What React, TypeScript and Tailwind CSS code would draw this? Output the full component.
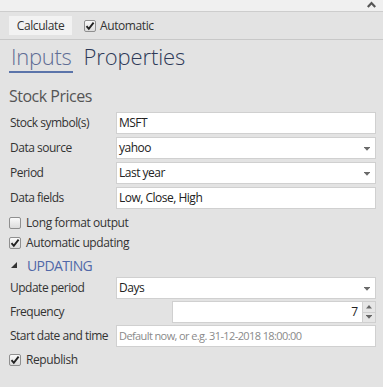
import React from "react";

function Check({ checked }: { checked: boolean }) {
  return (
    <span className="relative flex h-[12px] w-[12px] shrink-0 items-center justify-center rounded-[2px] border border-[#8f8f8f] bg-gradient-to-b from-[#fafafa] to-[#dcdcdc]">
      {checked && (
        <svg width="10" height="10" viewBox="0 0 10 10" className="absolute left-[0px] top-[0px]">
          <path d="M1.5 5.2 L3.8 7.8 L8.6 1.6" fill="none" stroke="#222" strokeWidth="1.9" />
        </svg>
      )}
    </span>
  );
}

function DropArrow() {
  return (
    <svg width="6" height="4" viewBox="0 0 6 4" className="absolute right-[5px] top-[9px]">
      <path d="M0 0 H6 V1 H0 Z M0.5 1 H5.5 L3 3.8 Z" fill="#6a6a6a" />
    </svg>
  );
}

function Field({
  value,
  placeholder,
  select,
}: {
  value?: string;
  placeholder?: string;
  select?: boolean;
}) {
  return (
    <div className="relative flex h-[22px] items-center border border-[#d0d0d0] bg-white pl-[2px] text-[12px] tracking-[-0.5px] text-[#222]">
      {value ? (
        <span>{value}</span>
      ) : (
        <span className="text-[11px] tracking-[-0.6px] text-[#8a8a8a]">{placeholder}</span>
      )}
      {select && <DropArrow />}
    </div>
  );
}

function Row({ label, children }: { label: string; children: React.ReactNode }) {
  return (
    <div className="flex h-[22px] items-center">
      <div className="w-[107px] shrink-0 whitespace-nowrap pl-px text-[12px] tracking-[-0.5px] text-[#333]">
        {label}
      </div>
      <div className="flex-1">{children}</div>
    </div>
  );
}

function CheckRow({ label, checked, h }: { label: string; checked: boolean; h: string }) {
  return (
    <div className={`flex items-center gap-[5px] ${h}`}>
      <Check checked={checked} />
      <span className="text-[12px] tracking-[-0.4px] text-[#333]">{label}</span>
    </div>
  );
}

export default function App() {
  return (
    <div
      className="h-[387px] w-[383px] overflow-hidden bg-[#e3e3e3]"
      style={{ fontFamily: '"Open Sans", "Liberation Sans", sans-serif' }}
    >
      {/* top strip */}
      <div className="flex h-[12px] items-start justify-end border-b border-[#cdcdcd] bg-[#f0f0f0] pr-[7px]">
        <svg width="9" height="7" viewBox="0 0 9 7" className="mt-[1px]">
          <path d="M0.8 6 L4.5 2 L8.2 6" fill="none" stroke="#555" strokeWidth="2.2" />
        </svg>
      </div>

      {/* toolbar */}
      <div className="flex h-[28px] items-center border-b border-[#c8c8c8] pl-[9px]">
        <button className="flex h-[19px] w-[63px] items-center justify-center bg-[#f2f2f2] text-[12px] tracking-[-0.4px] text-[#333]">
          Calculate
        </button>
        <div className="ml-[12px] flex items-center gap-[4px]">
          <Check checked />
          <span className="text-[12px] tracking-[-0.4px] text-[#333]">Automatic</span>
        </div>
      </div>

      {/* tabs */}
      <div className="flex items-end gap-[10px] pl-[9px] pt-[2px]">
        <div className="border-b-2 border-[#5b74aa] px-[2px] text-[22px] font-light leading-[29px] tracking-[-0.3px] text-[#5f6d95]">
          Inputs
        </div>
        <div className="pb-[2px] text-[22px] font-light leading-[29px] tracking-[-0.1px] text-[#2e3a58]">
          Properties
        </div>
      </div>

      <div className="pl-[9px] pr-[7px]">
        <div className="mt-[12px] h-[22px] text-[16px] leading-[22px] tracking-[-0.5px] text-[#555]">
          Stock Prices
        </div>

        <div className="mt-[5px] flex flex-col gap-[3px]">
          <Row label="Stock symbol(s)">
            <Field value="MSFT" />
          </Row>
          <Row label="Data source">
            <Field value="yahoo" select />
          </Row>
          <Row label="Period">
            <Field value="Last year" select />
          </Row>
          <Row label="Data fields">
            <Field value="Low, Close, High" />
          </Row>
        </div>

        <div className="mt-[4px]">
          <CheckRow label="Long format output" checked={false} h="h-[20px]" />
          <CheckRow label="Automatic updating" checked h="h-[20px]" />
        </div>

        <div className="mt-[2px] flex h-[20px] items-center gap-[10px] pl-[2px]">
          <svg width="6" height="6" viewBox="0 0 6 6">
            <path d="M6 0 V6 H0 Z" fill="#333" />
          </svg>
          <span className="text-[14px] tracking-[-0.6px] text-[#5068a8]">UPDATING</span>
        </div>

        <div className="mt-[2px] flex flex-col gap-[2px]">
          <Row label="Update period">
            <Field value="Days" select />
          </Row>
          <Row label="Frequency">
            <div className="flex h-[22px] pl-[56px]">
              <div className="flex flex-1 items-center justify-end border border-[#d0d0d0] bg-white pr-[4px] text-[12px] text-[#222]">
                7
              </div>
              <div className="flex w-[13px] flex-col">
                <div className="flex flex-1 items-center justify-center border border-l-0 border-[#cfcfcf] bg-[#e6e6e6]">
                  <svg width="6" height="4" viewBox="0 0 6 4">
                    <path d="M3 0 L6 3.5 H0 Z" fill="#666" />
                  </svg>
                </div>
                <div className="flex flex-1 items-center justify-center border border-l-0 border-t-0 border-[#cfcfcf] bg-[#e6e6e6]">
                  <svg width="6" height="4" viewBox="0 0 6 4">
                    <path d="M0 0 H6 V1 H0 Z M0.5 1 H5.5 L3 3.8 Z" fill="#666" />
                  </svg>
                </div>
              </div>
            </div>
          </Row>
          <Row label="Start date and time">
            <Field placeholder="Default now, or e.g. 31-12-2018 18:00:00" />
          </Row>
        </div>

        <CheckRow label="Republish" checked h="h-[26px]" />
      </div>
    </div>
  );
}
